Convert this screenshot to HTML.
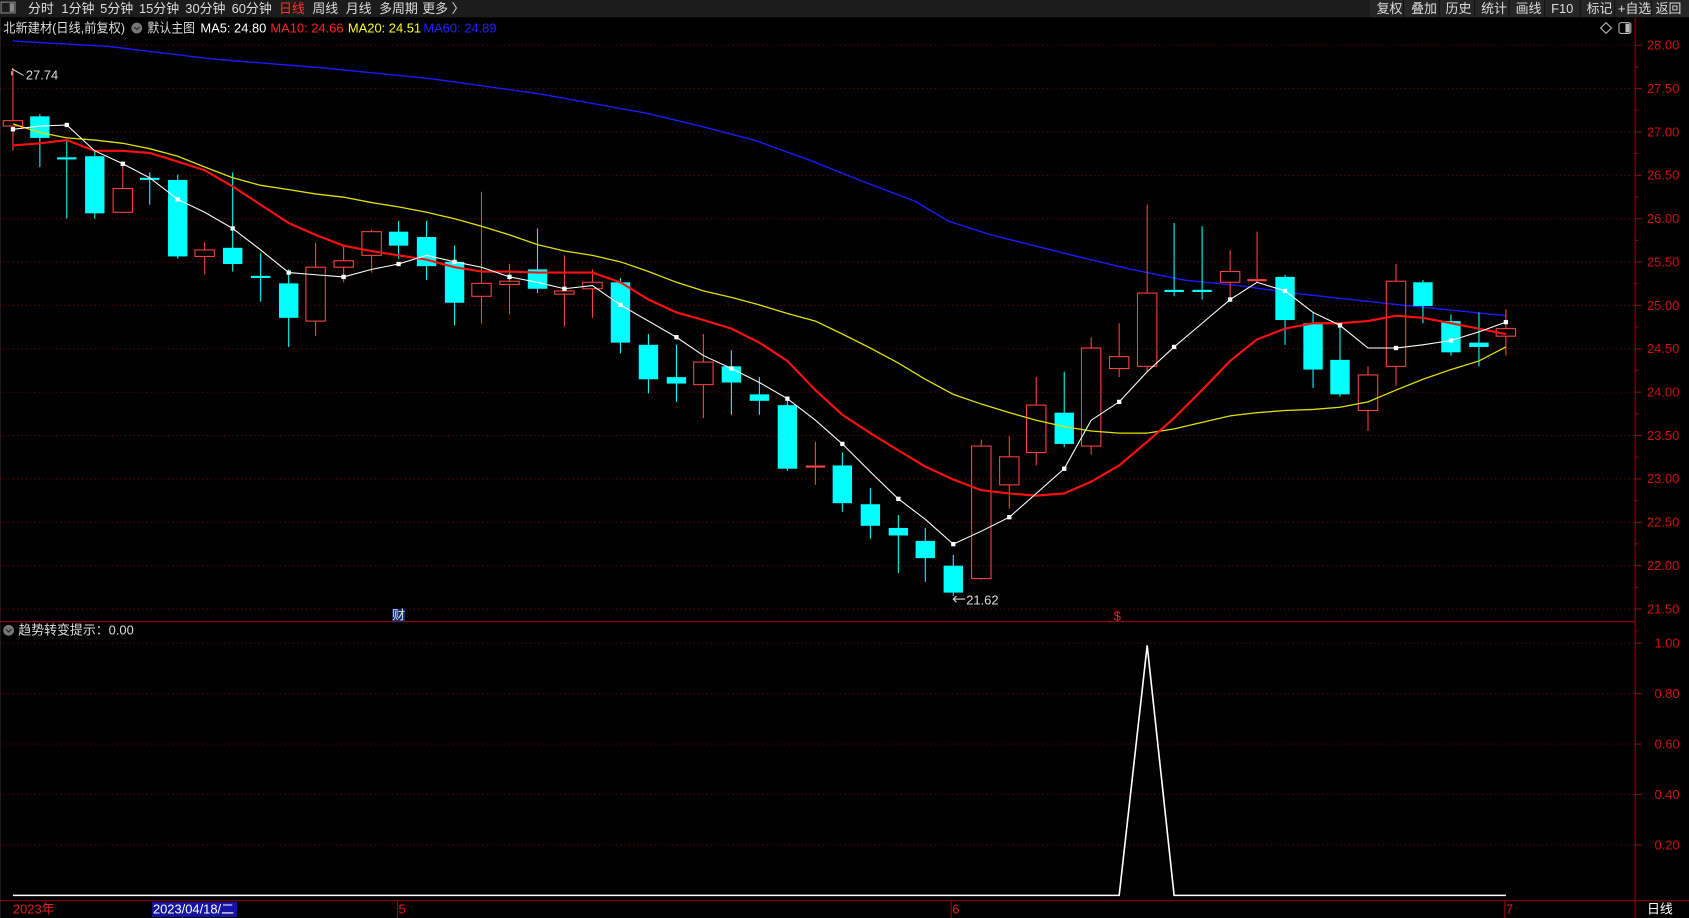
<!DOCTYPE html>
<html><head><meta charset="utf-8">
<style>
html,body{margin:0;padding:0;background:#000;width:1689px;height:918px;overflow:hidden}
svg{display:block}
text{font-family:"Liberation Sans","Noto Sans CJK SC",sans-serif;font-size:12px}
</style></head>
<body>
<svg id="s" width="1689" height="918" viewBox="0 0 1568 852" preserveAspectRatio="none" xmlns="http://www.w3.org/2000/svg">
<rect x="0" y="0" width="1568" height="852" fill="#000"/>
<rect x="0" y="0" width="1568" height="16" fill="#1c1c1c"/>
<rect x="1272" y="0" width="296" height="16" fill="#262626"/>
<g stroke="#111" stroke-width="1">
<line x1="1303" y1="0" x2="1303" y2="16"/><line x1="1336" y1="0" x2="1336" y2="16"/><line x1="1369" y1="0" x2="1369" y2="16"/><line x1="1401" y1="0" x2="1401" y2="16"/><line x1="1434" y1="0" x2="1434" y2="16"/><line x1="1467" y1="0" x2="1467" y2="16"/><line x1="1499" y1="0" x2="1499" y2="16"/><line x1="1533" y1="0" x2="1533" y2="16"/>
</g>
<rect x="1" y="2" width="13" height="10" fill="none" stroke="#888" stroke-width="1"/>
<rect x="9" y="3" width="4" height="8" fill="#888"/>
<g fill="#ddd">
<text x="26" y="12">分时</text><text x="57" y="12">1分钟</text><text x="93" y="12">5分钟</text><text x="129" y="12">15分钟</text><text x="172" y="12">30分钟</text><text x="215" y="12">60分钟</text>
<text x="259" y="12" fill="#ff3030">日线</text><text x="290" y="12">周线</text><text x="321" y="12">月线</text><text x="352" y="12">多周期</text><text x="392" y="12">更多 〉</text>
<text x="1278" y="12">复权</text><text x="1310" y="12">叠加</text><text x="1342" y="12">历史</text><text x="1375" y="12">统计</text><text x="1407" y="12">画线</text><text x="1440" y="12">F10</text><text x="1473" y="12">标记</text><text x="1502" y="12">+自选</text><text x="1537" y="12">返回</text>
</g>
<line x1="0" y1="16" x2="0" y2="852" stroke="#333"/>
<text x="3" y="30" fill="#ddd" textLength="113" lengthAdjust="spacingAndGlyphs">北新建材(日线,前复权)</text>
<circle cx="127" cy="26" r="5" fill="#777"/><path d="M124.5 25 L127 27.5 L129.5 25" stroke="#222" fill="none"/>
<text x="137" y="30" fill="#ddd" textLength="44" lengthAdjust="spacingAndGlyphs">默认主图</text>
<text x="186" y="30" fill="#fff">MA5: 24.80</text>
<text x="251" y="30" fill="#ff2020">MA10: 24.66</text>
<text x="323" y="30" fill="#ffff20">MA20: 24.51</text>
<text x="393" y="30" fill="#2020ff">MA60: 24.89</text>
<path d="M1491 21 L1496 26 L1491 31 L1486 26 Z" fill="none" stroke="#bbb"/>
<rect x="1503" y="21" width="11" height="10" rx="2" fill="none" stroke="#bbb"/><rect x="1509" y="22" width="4" height="8" fill="#bbb"/>
<line x1="1518" y1="16" x2="1518" y2="852" stroke="#a00000"/>
<line x1="0" y1="577" x2="1518" y2="577" stroke="#a00000"/>
<line x1="0" y1="836" x2="1568" y2="836" stroke="#a00000"/>
<g id="grid"></g>
<g id="chart"></g>
<text x="24" y="74" fill="#ddd">27.74</text>
<path d="M11 66 L11 70 M11 64 L22 70" stroke="#ddd" fill="none"/>
<text x="897" y="561" fill="#ddd">21.62</text>
<path d="M885 556 L896 556 M888 553 L885 556 L888 559" stroke="#ddd" fill="none"/>
<rect x="364" y="565" width="12" height="12" fill="#12306a"/><text x="364" y="575" fill="#ddd" font-size="11">财</text>
<text x="1034" y="576" fill="#f02020" font-size="11">$</text>
<circle cx="8" cy="585" r="5" fill="#777"/><path d="M5.5 584 L8 586.5 L10.5 584" stroke="#222" fill="none"/>
<text x="17" y="589" fill="#ddd">趋势转变提示：0.00</text>
<polyline points="12,831 1039,831 1065,599 1090,831 1398,831" fill="none" stroke="#fff" stroke-width="1.5"/>
<text x="12" y="848" fill="#e02020" font-size="11">2023年</text>
<rect x="141" y="837" width="79" height="14" fill="#1414a0"/>
<text x="142" y="848" fill="#fff" font-size="11">2023/04/18/二</text>
<text x="370" y="848" fill="#e02020" font-size="11">5</text>
<text x="884" y="848" fill="#e02020" font-size="11">6</text>
<text x="1398" y="848" fill="#e02020" font-size="11">7</text>
<text x="1529" y="848" fill="#fff" font-size="11">日线</text>
<g stroke="#a00000"><line x1="369" y1="836" x2="369" y2="852"/><line x1="883" y1="836" x2="883" y2="852"/><line x1="1397" y1="836" x2="1397" y2="852"/></g>
</svg>
<script>
var NS="http://www.w3.org/2000/svg",g=document.getElementById('grid'),c=document.getElementById('chart');
function el(t,a,p){var e=document.createElementNS(NS,t);for(var k in a)e.setAttribute(k,a[k]);if(a.txt){e.textContent=a.txt;e.removeAttribute('txt');}(p||c).appendChild(e);return e;}
var labs=["28.00","27.50","27.00","26.50","26.00","25.50","25.00","24.50","24.00","23.50","23.00","22.50","22.00","21.50"];
for(var i=0;i<14;i++){var y=42+i*40.25;el('line',{x1:0,y1:y,x2:1518,y2:y,stroke:'#7a0000','stroke-dasharray':'1 3'},g);el('line',{x1:1518,y1:y,x2:1524,y2:y,stroke:'#a00000'},g);el('line',{x1:1518,y1:y+20,x2:1521,y2:y+20,stroke:'#a00000'},g);el('text',{x:1529,y:y+4,fill:'#d01010',txt:labs[i]},g);}
var il=["1.00","0.80","0.60","0.40","0.20"];
for(var i=0;i<5;i++){var y=597+i*46.8;el('line',{x1:0,y1:y,x2:1518,y2:y,stroke:'#7a0000','stroke-dasharray':'1 3'},g);el('line',{x1:1518,y1:y,x2:1524,y2:y,stroke:'#a00000'},g);el('text',{x:1536,y:y+4,fill:'#d01010',txt:il[i]},g);}
var K=[[12,112,117,63,140,1],[37,108,128,106,155,0],[62,146,146,130,203,0],[88,145,198,140,203,0],[114,175,197,150,197,1],[139,165,165,160,190,0],[165,167,238,162,240,0],[190,232,238,225,255,1],[216,230,245,160,252,0],[242,256,256,235,280,0],[268,263,295,250,322,0],[293,248,298,225,312,1],[319,242,248,228,262,1],[345,215,237,213,253,1],[370,215,228,205,240,0],[396,220,247,205,260,0],[422,243,281,228,302,0],[447,263,275,178,300,1],[473,261,264,245,292,1],[499,250,268,212,272,0],[524,270,273,237,303,1],[550,262,268,250,295,1],[576,262,318,258,328,0],[602,320,352,310,365,0],[628,350,356,320,373,0],[653,336,357,310,388,1],[679,340,355,325,385,0],[705,366,372,350,385,0],[731,376,435,370,437,0],[757,432,434,410,450,1],[782,432,467,420,475,0],[808,468,488,453,500,0],[834,490,497,478,532,0],[859,502,518,490,540,0],[885,525,550,515,553,0],[911,414,537,408,538,1],[937,424,450,405,472,1],[962,376,420,350,432,1],[988,383,412,345,415,0],[1013,323,414,313,422,1],[1039,331,342,300,350,1],[1065,272,340,190,345,1],[1090,269,271,207,275,0],[1116,269,271,210,278,0],[1142,252,262,232,280,1],[1167,259,261,215,262,1],[1193,257,297,255,320,0],[1219,300,343,290,360,0],[1244,334,366,303,368,0],[1270,348,381,340,400,1],[1296,261,340,245,358,1],[1321,262,284,260,300,0],[1347,298,327,292,330,0],[1373,318,322,290,340,0],[1398,305,312,287,330,1]];
function line(pts,col,w){el('polyline',{points:pts.map(function(p){return p.join(',')}).join(' '),fill:'none',stroke:col,'stroke-width':w});}
var m60=[[12,38],[100,43],[200,55],[300,63],[400,73],[500,87],[600,105],[650,117],[700,130],[750,148],[800,168],[850,187],[880,205],[920,218],[1000,238],[1050,250],[1100,260],[1150,265],[1200,272],[1300,283],[1398,293]];
line(m60,'#1a1aff',1.3);
var xs=K.map(function(k){return k[0]});
var m20=[115,123,128,130,133,138,145,155,165,172,176,180,183,188,192,197,203,210,218,227,233,237,243,252,262,270,276,283,291,298,310,323,337,352,366,375,383,390,396,400,402,402,398,392,386,383,381,380,378,373,362,352,343,335,322];
var m10=[135,133,130,140,140,142,150,158,173,190,207,218,228,233,237,241,248,252,252,253,253,253,262,278,290,297,305,318,335,362,385,402,418,433,445,455,458,460,458,447,432,410,388,362,335,315,305,300,300,298,293,295,300,305,310];
var m5=[120,117,116,140,152,165,185,197,212,232,253,255,257,250,245,237,243,248,257,262,268,265,283,298,313,330,342,355,370,390,412,438,463,482,505,493,480,458,435,390,373,345,322,300,278,262,270,290,302,323,323,320,316,308,299];
K.forEach(function(k){var x=k[0],col=k[5]?'#ff4040':'#00ffff';
 if(k[5]){el('line',{x1:x,y1:k[3],x2:x,y2:k[1],stroke:col});el('line',{x1:x,y1:k[2],x2:x,y2:k[4],stroke:col});
  if(k[2]-k[1]<3)el('line',{x1:x-9,y1:k[1]+1,x2:x+9,y2:k[1]+1,stroke:col,'stroke-width':2});else el('rect',{x:x-9,y:k[1],width:18,height:k[2]-k[1],fill:'none',stroke:col});}
 else{el('line',{x1:x,y1:k[3],x2:x,y2:k[4],stroke:col});el('rect',{x:x-9,y:k[1],width:18,height:Math.max(2,k[2]-k[1]),fill:col});}
});
line(xs.map(function(x,i){return[x,m20[i]]}),'#e0e000',1.2);
line(xs.map(function(x,i){return[x,m10[i]]}),'#ff1010',2);
line(xs.map(function(x,i){return[x,m5[i]]}),'#ffffff',1);
xs.forEach(function(x,i){if(i%2==0)el('rect',{x:x-2,y:m5[i]-2,width:4,height:4,fill:'#fff'});});
</script>
</body></html>
